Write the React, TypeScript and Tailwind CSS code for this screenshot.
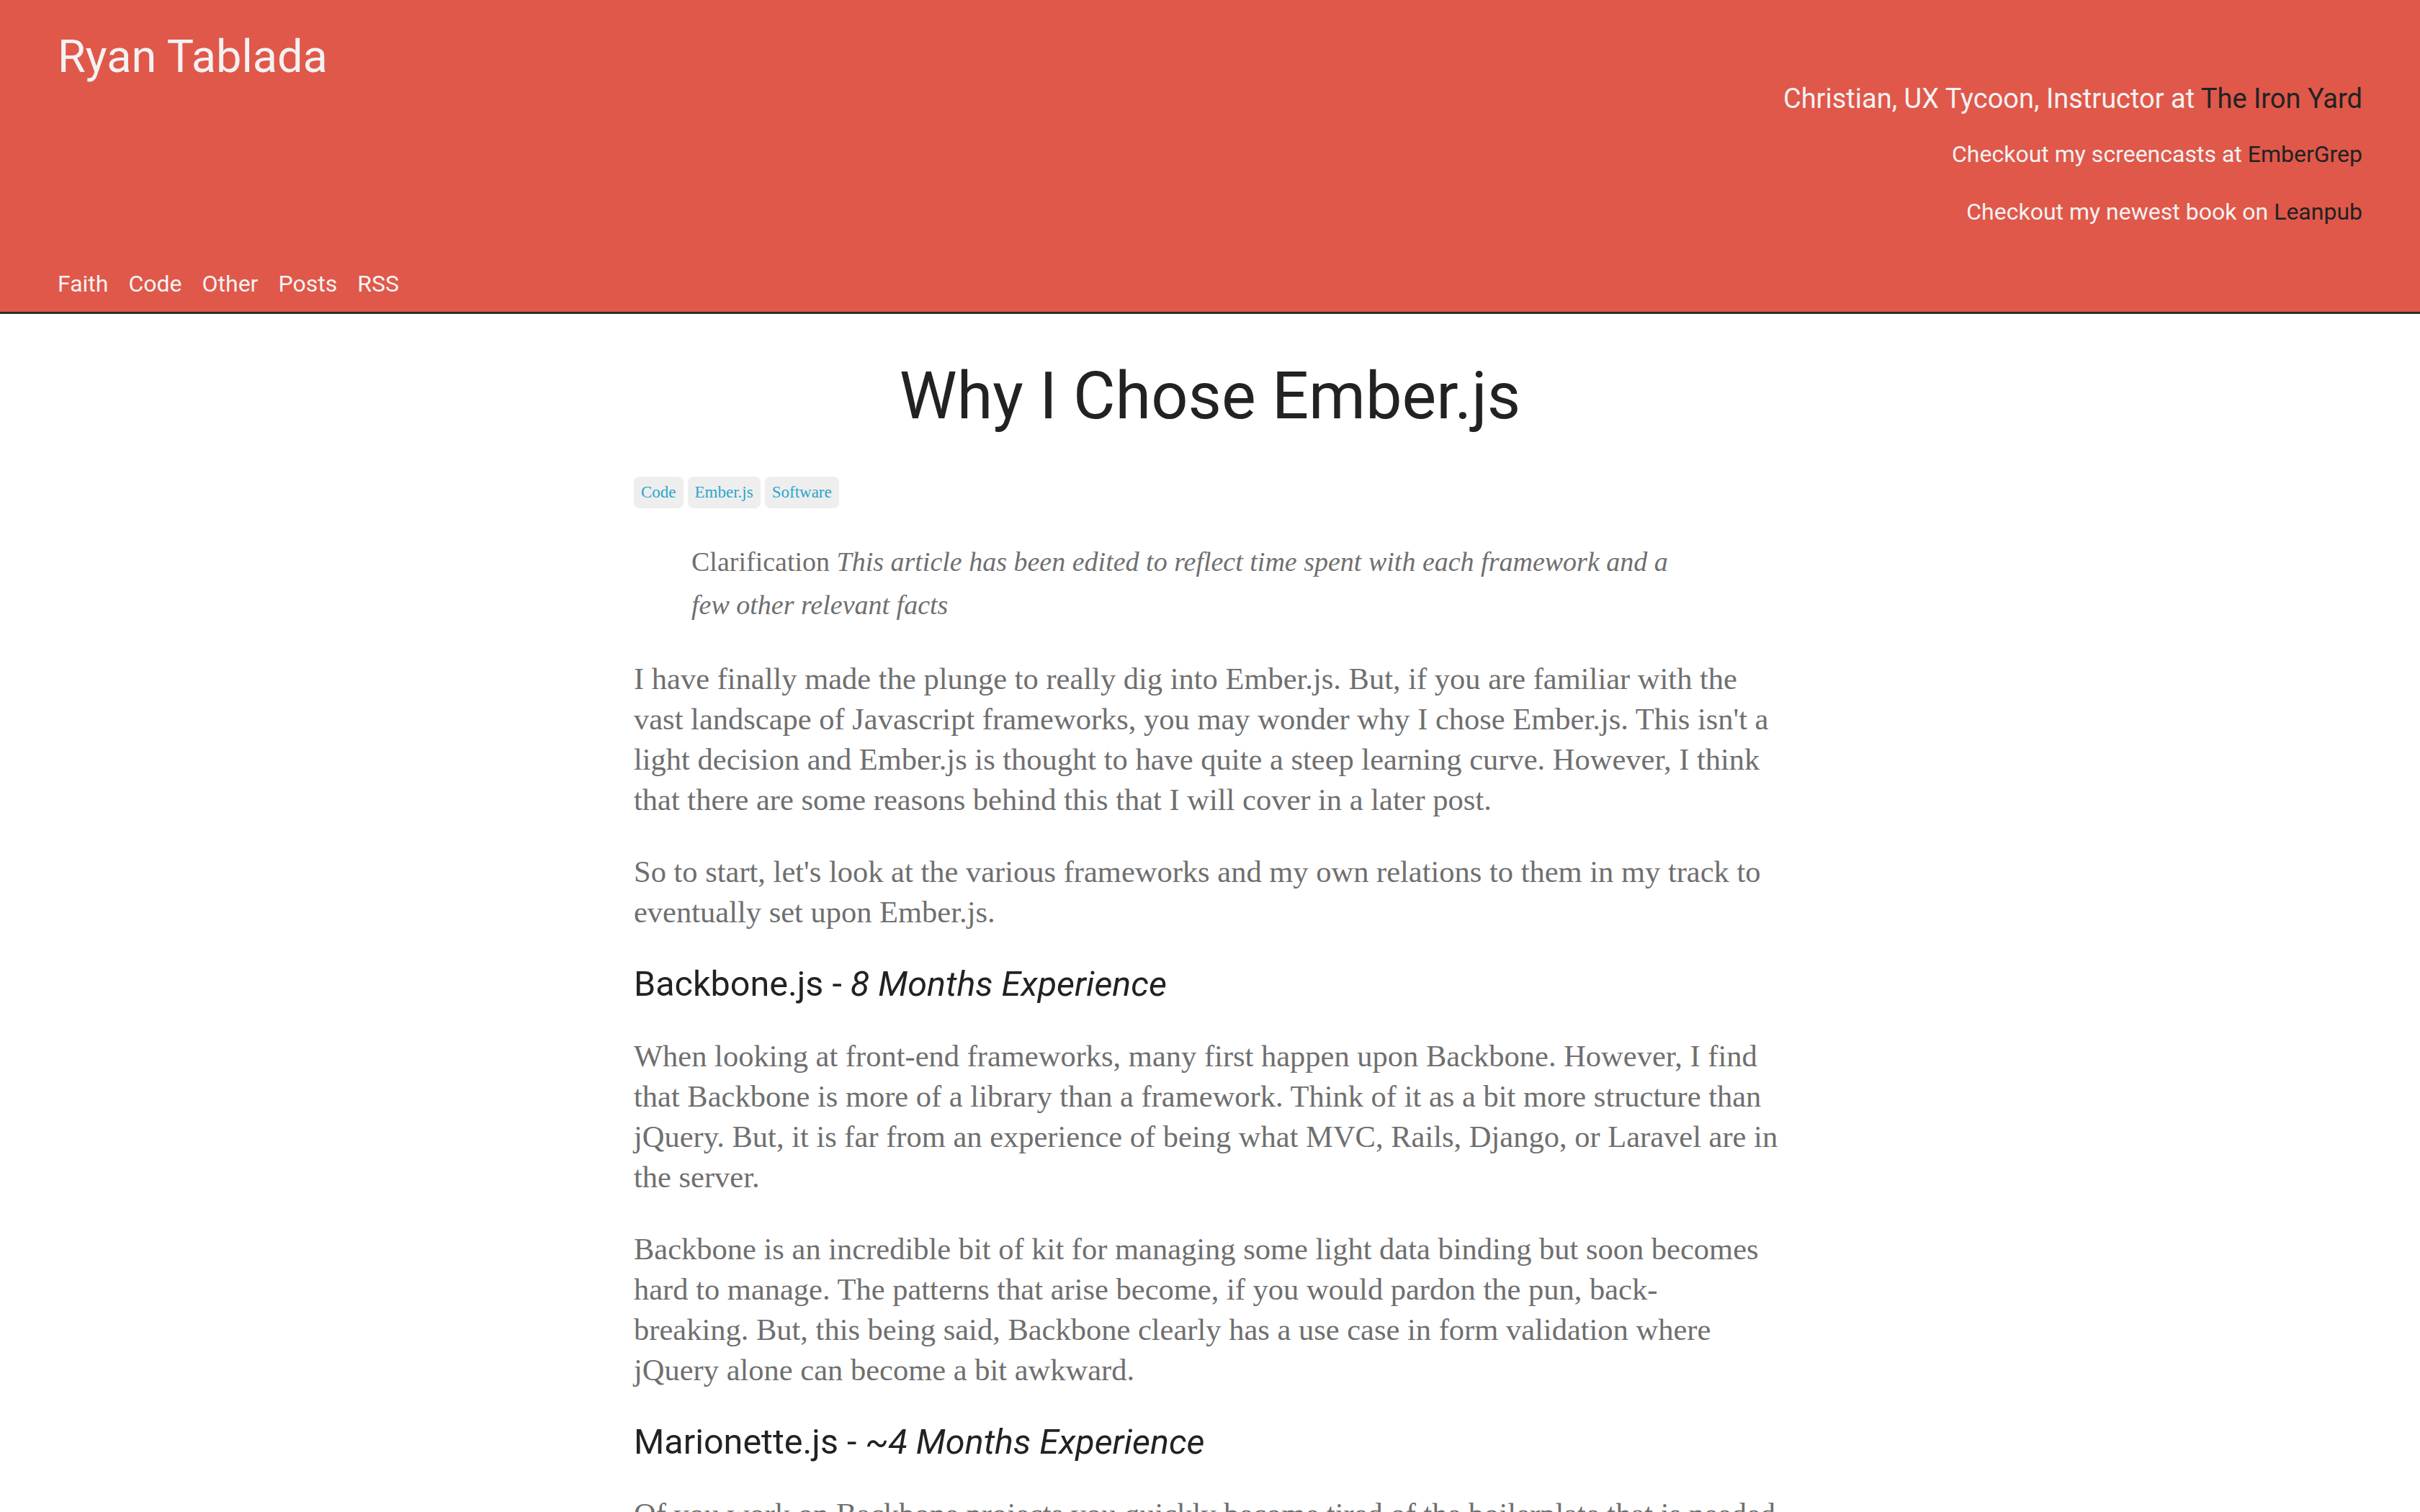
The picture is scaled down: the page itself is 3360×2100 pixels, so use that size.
import React from "react";

const heading = "font-['Roboto','Open_Sans',sans-serif]";
const serif = "font-['Liberation_Serif','Times_New_Roman',serif]";

const tags = ["Code", "Ember.js", "Software"];

function Header() {
  return (
    <header className={`${heading} bg-[#e0584a] text-[#f2f2f2] border-b-[3px] border-[#2e2e2e] h-[436px] px-[80px] pt-[48px] pb-[19px] flex flex-col`}>
      <div className="flex justify-between items-start">
        <h1 className="text-[63px] leading-[62px]">Ryan Tablada</h1>
        <div className="text-right mt-[67px]">
          <p className="text-[38px] leading-[44px]">
            Christian, UX Tycoon, Instructor at <a className="text-[#222]">The Iron Yard</a>
          </p>
          <p className="text-[32px] leading-[40px] mt-[35px]">
            Checkout my screencasts at <a className="text-[#222]">EmberGrep</a>
          </p>
          <p className="text-[32px] leading-[40px] mt-[40px]">
            Checkout my newest book on <a className="text-[#222]">Leanpub</a>
          </p>
        </div>
      </div>
      <nav className="mt-auto flex gap-[28px] text-[32px] leading-[40px]">
        <a>Faith</a>
        <a>Code</a>
        <a>Other</a>
        <a>Posts</a>
        <a>RSS</a>
      </nav>
    </header>
  );
}

function Para({ children }: { children: React.ReactNode }) {
  return <p className="text-[42.5px] leading-[56px] mb-[44px]">{children}</p>;
}

function SubHead({ name, exp }: { name: string; exp: string }) {
  return (
    <h3 className={`${heading} text-[48.5px] leading-[56px] text-[#222] mb-[44px]`}>
      {name} - <em>{exp}</em>
    </h3>
  );
}

export default function App() {
  return (
    <div className="min-h-screen bg-white overflow-hidden">
      <Header />
      <main className="max-w-[1600px] mx-auto pt-[65px]">
        <h2 className={`${heading} text-[90px] leading-[100px] text-[#222] text-center`}>Why I Chose Ember.js</h2>

        <div className={`${serif} flex gap-[6px] mt-[61px]`}>
          {tags.map((t) => (
            <span key={t} className="h-[44px] px-[10px] flex items-center bg-[#eeeeee] rounded-[8px] text-[23px] text-[#2ba6cb]">
              {t}
            </span>
          ))}
        </div>

        <div className={`${serif} text-[#6f6f6f]`}>
          <blockquote className="ml-[80px] mr-[120px] mt-[44px] mb-[45px] text-[38px] leading-[60px]">
            Clarification <em>This article has been edited to reflect time spent with each framework and a few other relevant facts</em>
          </blockquote>

          <Para>
            I have finally made the plunge to really dig into Ember.js. But, if you are familiar with the vast landscape of Javascript frameworks, you may wonder why I chose Ember.js. This isn't a light decision and Ember.js is thought to have quite a steep learning curve. However, I think that there are some reasons behind this that I will cover in a later post.
          </Para>
          <Para>
            So to start, let's look at the various frameworks and my own relations to them in my track to eventually set upon Ember.js.
          </Para>

          <SubHead name="Backbone.js" exp="8 Months Experience" />

          <Para>
            When looking at front-end frameworks, many first happen upon Backbone. However, I find that Backbone is more of a library than a framework. Think of it as a bit more structure than jQuery. But, it is far from an experience of being what MVC, Rails, Django, or Laravel are in the server.
          </Para>
          <Para>
            Backbone is an incredible bit of kit for managing some light data binding but soon becomes hard to manage. The patterns that arise become, if you would pardon the pun, back-
            <br />
            breaking. But, this being said, Backbone clearly has a use case in form validation where jQuery alone can become a bit awkward.
          </Para>

          <SubHead name="Marionette.js" exp="~4 Months Experience" />

          <Para>
            Of you work on Backbone projects you quickly become tired of the boilerplate that is needed to render views and manage their lifecycle.
          </Para>
        </div>
      </main>
    </div>
  );
}
